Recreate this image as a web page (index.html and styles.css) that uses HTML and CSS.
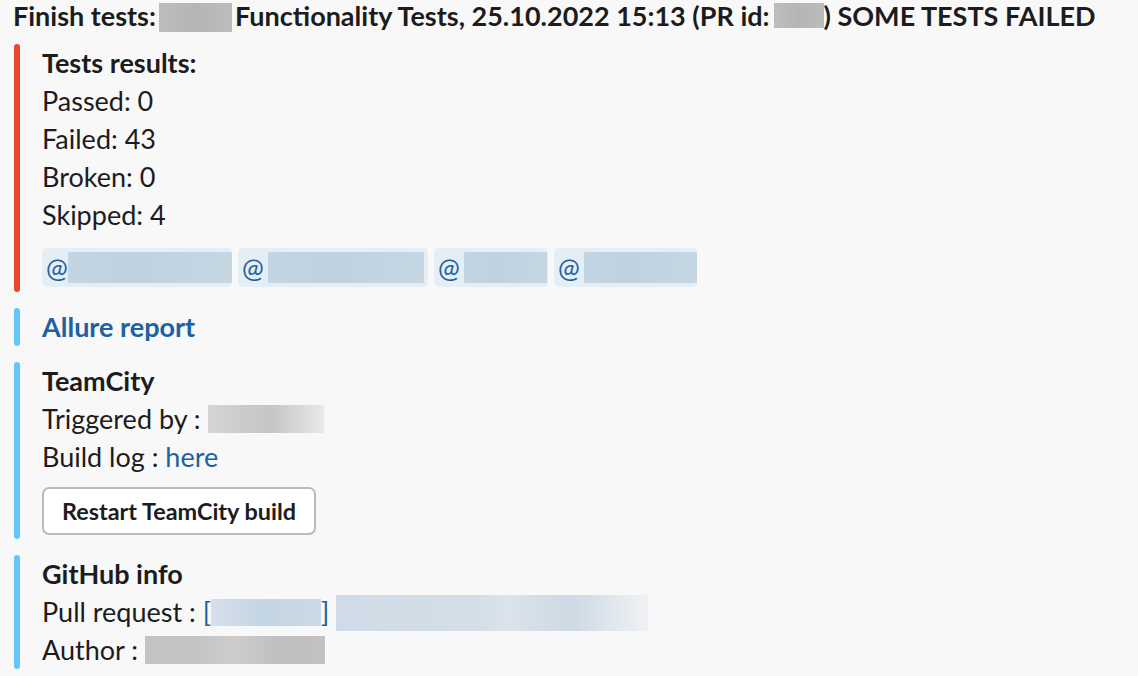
FILE: index.html
```html
<!DOCTYPE html>
<html>
<head>
<meta charset="utf-8">
<link rel="stylesheet" href="styles.css">
</head>
<body>
<div class="msg">
  <div class="title">Finish tests:<span class="redact r-gray r-t1"></span>Functionality Tests, 25.10.2022 15:13 (PR id:<span class="redact r-gray r-t2"></span>) SOME TESTS FAILED</div>
  <div class="atts">
    <div class="att att-red">
      <div class="bar bar-red"></div>
      <div class="att-body">
        <div class="line bold">Tests results:</div>
        <div class="line">Passed: 0</div>
        <div class="line">Failed: 43</div>
        <div class="line">Broken: 0</div>
        <div class="line">Skipped: 4</div>
        <div class="chips">
          <span class="chip c1"><span class="at">@</span><span class="chip-blur"></span></span>
          <span class="chip c2"><span class="at">@</span><span class="chip-blur"></span></span>
          <span class="chip c3"><span class="at">@</span><span class="chip-blur"></span></span>
          <span class="chip c4"><span class="at">@</span><span class="chip-blur"></span></span>
        </div>
      </div>
    </div>
    <div class="att">
      <div class="bar bar-blue"></div>
      <div class="att-body">
        <div class="line bold link">Allure report</div>
      </div>
    </div>
    <div class="att att-tc">
      <div class="bar bar-blue"></div>
      <div class="att-body">
        <div class="line bold">TeamCity</div>
        <div class="line">Triggered by : <span class="redact r-fade r-trig"></span></div>
        <div class="line">Build log : <span class="link">here</span></div>
        <button class="btn">Restart TeamCity build</button>
      </div>
    </div>
    <div class="att att-gh">
      <div class="bar bar-blue"></div>
      <div class="att-body">
        <div class="line bold">GitHub info</div>
        <div class="line">Pull request : <span class="link">[<span class="redact r-blue r-pr"></span>]</span> <span class="redact r-bluefade r-prtitle"></span></div>
        <div class="line">Author : <span class="redact r-gray2 r-author"></span></div>
      </div>
    </div>
  </div>
</div>
</body>
</html>
```

FILE: styles.css
```css
html, body {
  margin: 0;
  padding: 0;
  background: #f8f8f8;
}
body {
  font-family: Lato, "Noto Sans", sans-serif;
  color: #1d1c1d;
  overflow: hidden;
}
.msg {
  padding-left: 13px;
}
.title {
  font-weight: 700;
  font-size: 27px;
  line-height: 32px;
  height: 32px;
  white-space: nowrap;
}
.redact {
  display: inline-block;
  vertical-align: top;
}
.r-gray {
  background: linear-gradient(90deg, #bdbdbd, #b5b5b5 50%, #bcbcbc);
}
.r-t1 {
  width: 73px;
  height: 29px;
  margin: 3px 3px 0 3px;
}
.r-t2 {
  width: 50px;
  height: 25px;
  margin: 3px 0 0 4px;
}
.atts {
  margin-top: 12px;
  display: flex;
  flex-direction: column;
  gap: 16px;
}
.att {
  display: flex;
  gap: 22px;
  padding-left: 1px;
}
.bar {
  width: 6px;
  border-radius: 3px;
  flex: none;
}
.bar-red { background: #e9472b; }
.bar-blue { background: #62c7f8; }
.att-body {
  display: flex;
  flex-direction: column;
  align-items: flex-start;
  font-size: 27px;
}
.att-red .att-body { padding-bottom: 5px; }
.att-tc .att-body { padding-bottom: 4px; }
.line {
  line-height: 38px;
  height: 38px;
  white-space: nowrap;
}
.bold { font-weight: 700; }
.link { color: #1d61a0; }
.chips {
  display: flex;
  gap: 6px;
  margin-top: 14px;
}
.chip {
  display: flex;
  align-items: center;
  height: 39px;
  padding-left: 4px;
  box-sizing: border-box;
  background: #e4eef4;
  border-radius: 5px;
  color: #1d61a0;
  font-size: 26px;
  overflow: hidden;
}
.c1 { width: 190px; }
.c2 { width: 190px; padding-right: 4px; }
.c3 { width: 114px; padding-right: 1px; }
.c4 { width: 143px; }
.at { flex: none; }
.chip-blur {
  flex: 1;
  align-self: center;
  height: 31px;
  background: linear-gradient(90deg, #c3d5e2, #bed2e0 40%, #c6d7e3);
}
.c2 .chip-blur { margin-left: 4px; }
.c3 .chip-blur { margin-left: 4px; }
.c4 .chip-blur { margin-left: 4px; }
.r-fade {
  background: linear-gradient(90deg, #d6d6d6, #cbcbcb 30%, #c6c6c6 55%, #e9e9e9);
}
.r-trig {
  width: 116px;
  height: 28px;
  margin-top: 5px;
}
.btn {
  margin-top: 11px;
  height: 48px;
  padding: 0 18px;
  font-family: Lato, "Noto Sans", sans-serif;
  font-weight: 700;
  font-size: 23.4px;
  color: #1d1c1d;
  background: #ffffff;
  border: 2px solid #bbbbbb;
  border-radius: 7px;
}
.r-blue {
  background: linear-gradient(90deg, #d5e0ea, #c4d5e3 50%, #cbd9e5);
}
.r-pr {
  width: 110px;
  height: 27px;
  margin-top: 6px;
}
.r-bluefade {
  background: linear-gradient(90deg, #cfdbe6, #d3dee8 45%, #dbe3eb 55%, #cdd9e4 75%, #e9edf1 95%, #eef1f4);
}
.r-prtitle {
  width: 312px;
  height: 36px;
  margin-top: 2px;
}
.r-gray2 {
  background: linear-gradient(90deg, #c3c3c3, #c4c4c4 30%, #cdcdcd 50%, #bfbfbf 75%, #c2c2c2);
}
.r-author {
  width: 180px;
  height: 28px;
  margin-top: 5px;
}
```
